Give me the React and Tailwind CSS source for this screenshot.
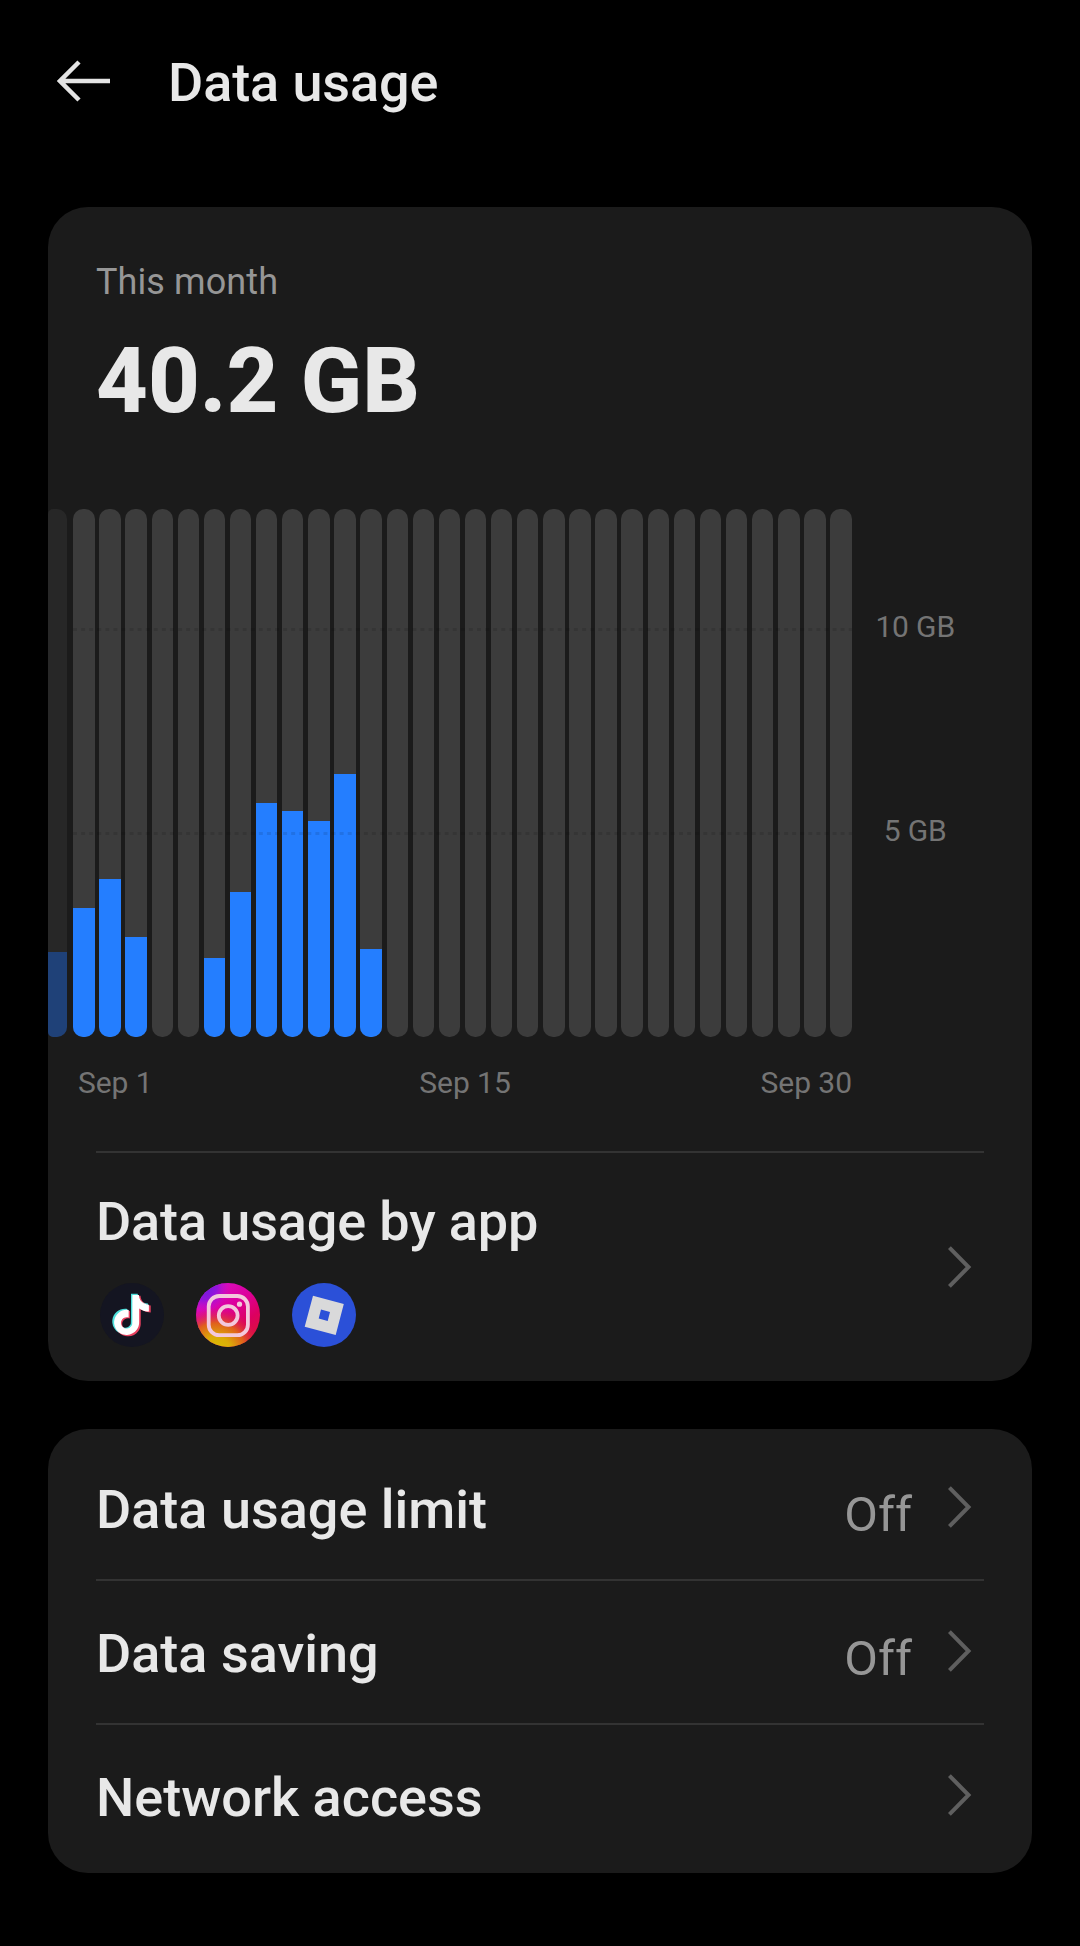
import { SiTiktok } from 'react-icons/si';

const TOTAL_DAYS = 30;
const CHART_HEIGHT = 528;

// bar heights in px, days without an entry have no usage
const usage = {
  1: 129.5,
  2: 158.5,
  3: 100.5,
  6: 79,
  7: 145,
  8: 234.5,
  9: 226,
  10: 216,
  11: 263.5,
  12: 88,
};

function Chevron() {
  return (
    <svg className="w-6 h-11 shrink-0" viewBox="0 0 24 44" fill="none" stroke="#5f5f5f" strokeWidth="4">
      <path d="M1.4 2.6L20.5 22L1.4 41.4" />
    </svg>
  );
}

function TiktokIcon() {
  return (
    <svg className="w-16 h-16" viewBox="0 0 64 64">
      <circle cx="32" cy="32" r="32" fill="#141521" />
      <SiTiktok x="9.6" y="10.4" size={41} color="#4fe0dc" />
      <SiTiktok x="12.4" y="12.4" size={41} color="#e8405f" />
      <SiTiktok x="11.5" y="11.9" size={40} color="#ffffff" />
    </svg>
  );
}

function InstagramIcon() {
  return (
    <svg className="w-16 h-16" viewBox="0 0 64 64" fill="none">
      <defs>
        <linearGradient id="igBase" x1="14" y1="4" x2="54" y2="56" gradientUnits="userSpaceOnUse">
          <stop offset="0" stopColor="#d812c4" />
          <stop offset="0.4" stopColor="#dc00a0" />
          <stop offset="0.75" stopColor="#dc0060" />
          <stop offset="1" stopColor="#dc1040" />
        </linearGradient>
        <radialGradient id="igWarm" cx="20" cy="70" r="46" gradientUnits="userSpaceOnUse">
          <stop offset="0" stopColor="#d8c400" />
          <stop offset="0.35" stopColor="#dcac08" />
          <stop offset="0.65" stopColor="#e0601c" />
          <stop offset="1" stopColor="#dc1050" stopOpacity="0" />
        </radialGradient>
        <radialGradient id="igViolet" cx="8" cy="4" r="26" gradientUnits="userSpaceOnUse">
          <stop offset="0" stopColor="#6a1ee0" />
          <stop offset="0.5" stopColor="#9414dc" />
          <stop offset="1" stopColor="#c80cc8" stopOpacity="0" />
        </radialGradient>
      </defs>
      <circle cx="32" cy="32" r="32" fill="url(#igBase)" />
      <circle cx="32" cy="32" r="32" fill="url(#igWarm)" />
      <circle cx="32" cy="32" r="32" fill="url(#igViolet)" />
      <g stroke="#f3c8dc" strokeWidth="3.8">
        <rect x="12.7" y="13" width="39.2" height="39.2" rx="10.5" />
        <circle cx="32.2" cy="32.5" r="9.4" />
      </g>
      <circle cx="43.5" cy="21.2" r="2.6" fill="#f3c8dc" />
    </svg>
  );
}

function RobloxIcon() {
  return (
    <svg className="w-16 h-16" viewBox="0 0 64 64">
      <circle cx="32" cy="32" r="32" fill="#2b50d8" />
      <path
        fill="#d9d9da"
        fillRule="evenodd"
        d="M21 12.8L51.8 21L43.7 52L12.7 43.8ZM29 26.6L26.7 35.6L35.7 38L38 29Z"
      />
    </svg>
  );
}

function Bar({ height }) {
  return (
    <div className="w-[21.4px] h-full flex items-end shrink-0 rounded-[10px] overflow-hidden bg-[#3c3c3c]">
      {height > 0 && <div className="w-full bg-[#247eff]" style={{ height }} />}
    </div>
  );
}

function GridLine() {
  return (
    <svg className="block w-full h-[3px]" viewBox="0 0 779 3">
      <line x1="0" y1="1.5" x2="779" y2="1.5" stroke="#000" strokeOpacity="0.1" strokeWidth="3" strokeDasharray="4 4.08" />
    </svg>
  );
}

function UsageChart() {
  const days = Array.from({ length: TOTAL_DAYS }, (_, i) => i + 1);

  return (
    <div className="flex" style={{ height: CHART_HEIGHT }}>
      <div className="relative w-[804.2px] h-full flex justify-between">
        {/* last day of the previous month, cut by the card edge */}
        <div className="w-[18.7px] h-full flex items-end shrink-0 overflow-hidden rounded-l-[5px] rounded-r-[10px] bg-[#272727]">
          <div className="w-full h-[85.5px] bg-[#1f4178]" />
        </div>
        <div className="w-[779px] h-full flex justify-between">
          {days.map((day) => (
            <Bar key={day} height={usage[day] || 0} />
          ))}
        </div>
        <div className="absolute right-0 top-[119px] w-[779px]">
          <GridLine />
        </div>
        <div className="absolute right-0 top-[323px] w-[779px]">
          <GridLine />
        </div>
      </div>
      <div className="w-[126px] pt-[98px] flex flex-col gap-[164px] text-center text-[30px] leading-10 tracking-[-0.15px] text-[#747474]">
        <span>10 GB</span>
        <span>5 GB</span>
      </div>
    </div>
  );
}

function SettingRow({ label, value }) {
  return (
    <div className="h-[142px] flex items-center">
      <span className="flex-1 pt-[3px] text-[54px] leading-[64px] font-medium">{label}</span>
      {value && <span className="mr-9 pt-3.5 text-[49px] leading-[64px] text-[#969696]">{value}</span>}
      <div className="mr-3 -mt-0.5">
        <Chevron />
      </div>
    </div>
  );
}

export default function App() {
  return (
    <div className="w-[1080px] h-[1946px] bg-black px-12 overflow-hidden text-[#e8e8e8] font-['Roboto',sans-serif]">
      <header className="h-[207px] pt-[51px] flex items-start">
        <svg className="w-[54px] h-[42px] ml-[9px] mt-[9px]" viewBox="0 0 54 42" fill="none" stroke="#e4e4e4" strokeWidth="4.5">
          <path d="M22 2L3 21L22 40M3 21H53" />
        </svg>
        <h1 className="ml-[57px] text-[54px] leading-[64px] tracking-[-0.1px] font-medium">Data usage</h1>
      </header>

      <section className="h-[1174px] rounded-[40px] bg-[#1b1b1b] overflow-hidden">
        <div className="h-[302px] px-12 pt-[51px]">
          <p className="text-[36px] leading-[48px] tracking-[0.1px] text-[#969696]">This month</p>
          <p className="mt-[26px] text-[90px] leading-[100px] font-extrabold">40.2 GB</p>
        </div>

        <UsageChart />

        <div className="grid grid-cols-3 w-[804px] pl-[30px] pt-[26px] text-[30px] leading-10 tracking-[-0.05px] text-[#747474]">
          <span>Sep 1</span>
          <span className="text-center">Sep 15</span>
          <span className="text-right">Sep 30</span>
        </div>

        <div className="mx-12 mt-12 h-0.5 bg-[#333]" />

        <div className="px-12 flex items-center h-[228px]">
          <div className="flex-1 pt-[3px]">
            <p className="text-[54px] leading-[64px] tracking-[-0.13px] font-medium">Data usage by app</p>
            <div className="flex gap-8 pl-1 mt-[29px]">
              <TiktokIcon />
              <InstagramIcon />
              <RobloxIcon />
            </div>
          </div>
          <div className="mr-3">
            <Chevron />
          </div>
        </div>
      </section>

      <section className="mt-12 h-[444px] px-12 pt-2 rounded-[40px] bg-[#1b1b1b]">
        <SettingRow label="Data usage limit" value="Off" />
        <div className="h-0.5 bg-[#333]" />
        <SettingRow label="Data saving" value="Off" />
        <div className="h-0.5 bg-[#333]" />
        <SettingRow label="Network access" />
      </section>
    </div>
  );
}
